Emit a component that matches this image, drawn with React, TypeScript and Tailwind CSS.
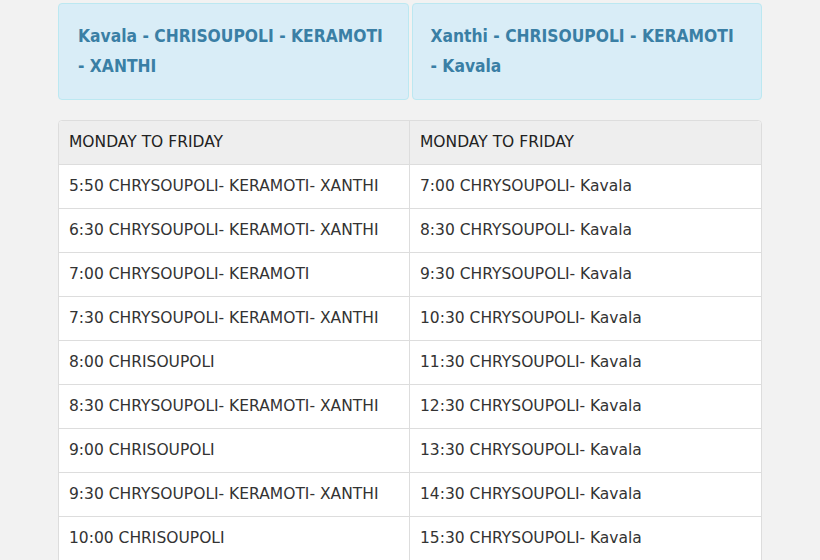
import React from "react";

const left = [
  "5:50 CHRYSOUPOLI- KERAMOTI- XANTHI",
  "6:30 CHRYSOUPOLI- KERAMOTI- XANTHI",
  "7:00 CHRYSOUPOLI- KERAMOTI",
  "7:30 CHRYSOUPOLI- KERAMOTI- XANTHI",
  "8:00 CHRISOUPOLI",
  "8:30 CHRYSOUPOLI- KERAMOTI- XANTHI",
  "9:00 CHRISOUPOLI",
  "9:30 CHRYSOUPOLI- KERAMOTI- XANTHI",
  "10:00 CHRISOUPOLI",
];
const right = [
  "7:00 CHRYSOUPOLI- Kavala",
  "8:30 CHRYSOUPOLI- Kavala",
  "9:30 CHRYSOUPOLI- Kavala",
  "10:30 CHRYSOUPOLI- Kavala",
  "11:30 CHRYSOUPOLI- Kavala",
  "12:30 CHRYSOUPOLI- Kavala",
  "13:30 CHRYSOUPOLI- Kavala",
  "14:30 CHRYSOUPOLI- Kavala",
  "15:30 CHRYSOUPOLI- Kavala",
];

export default function App() {
  return (
    <div className="min-h-[560px] w-full bg-[#f2f2f2] overflow-hidden">
      <div className="mx-auto w-[704px] pt-[3px]">
        <div
          className="grid grid-cols-2 gap-[3px]"
          style={{ fontFamily: '"DejaVu Sans Condensed", "DejaVu Sans", sans-serif' }}
        >
          <div className="rounded-[4px] border border-[#bce8f1] bg-[#d9edf7] pl-[19px] pr-[16px] pt-[17px] pb-[18px] text-[17.3px] font-bold leading-[30px] text-[#3a7fa5]">
            Kavala - CHRISOUPOLI - KERAMOTI - XANTHI
          </div>
          <div className="rounded-[4px] border border-[#bce8f1] bg-[#d9edf7] pl-[18px] pr-[16px] pt-[17px] pb-[18px] text-[17.3px] font-bold leading-[30px] text-[#3a7fa5]">
            Xanthi - CHRISOUPOLI - KERAMOTI - Kavala
          </div>
        </div>
        <div
          className="mt-[20px] rounded-t-[4px] border border-[#dddddd] bg-white text-[15.5px] text-[#333333]"
          style={{ fontFamily: '"DejaVu Sans", sans-serif' }}
        >
          <div className="grid grid-cols-[351px_1fr] h-[43px] bg-[#eeeeee] rounded-t-[4px] text-[#222222]">
            <div className="flex items-center border-r border-[#dddddd] pl-[10px]">MONDAY TO FRIDAY</div>
            <div className="flex items-center pl-[10px]">MONDAY TO FRIDAY</div>
          </div>
          {left.map((l, i) => (
            <div key={i} className="grid grid-cols-[351px_1fr] h-[44px] border-t border-[#dddddd]">
              <div className="flex items-center border-r border-[#dddddd] pl-[10px]">{l}</div>
              <div className="flex items-center pl-[10px]">{right[i]}</div>
            </div>
          ))}
        </div>
      </div>
    </div>
  );
}
